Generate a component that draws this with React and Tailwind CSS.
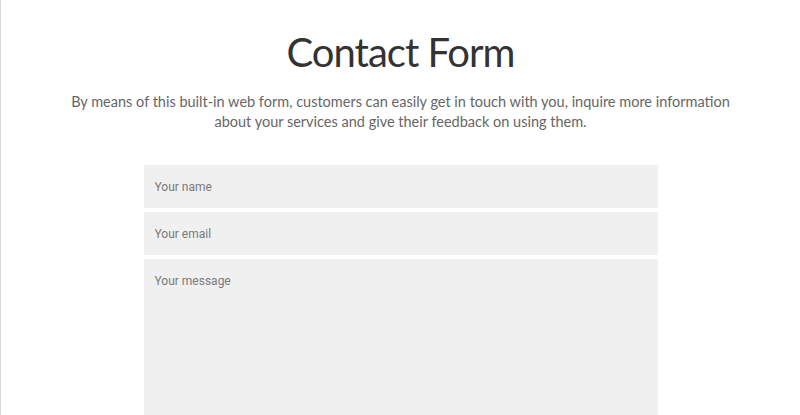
import React from "react";

const ContactForm = () => {
  return (
    <div className="flex w-full h-[415px] flex-col items-center border-l border-[#d9d9d9] bg-white overflow-hidden">
      <h1
        className="mt-[28px] text-[40px] leading-[49px] tracking-[-1px] text-[#333333]"
        style={{ fontFamily: "Lato, 'Open Sans', sans-serif" }}
      >
        Contact Form
      </h1>
      <p
        className="mt-[15px] text-center text-[14.5px] leading-[20px] text-[#666666]"
        style={{ fontFamily: "Lato, 'Noto Sans', sans-serif" }}
      >
        By means of this built-in web form, customers can easily get in touch
        with you, inquire more information
        <br />
        about your services and give their feedback on using them.
      </p>
      <form
        className="mt-[33px] flex w-[514px] flex-col gap-[4px]"
        style={{ fontFamily: "Roboto, 'Liberation Sans', sans-serif" }}
      >
        <input
          type="text"
          placeholder="Your name"
          className="h-[43px] w-full bg-[#f0f0f0] px-[11px] text-[12px] text-[#555] placeholder:text-[#7a7a7a] outline-none"
        />
        <input
          type="email"
          placeholder="Your email"
          className="h-[43px] w-full bg-[#f0f0f0] px-[11px] text-[12px] text-[#555] placeholder:text-[#7a7a7a] outline-none"
        />
        <textarea
          placeholder="Your message"
          className="h-[200px] w-full resize-none bg-[#f0f0f0] px-[11px] py-[13px] text-[12px] text-[#555] placeholder:text-[#7a7a7a] outline-none"
        />
      </form>
    </div>
  );
};

export default function App() {
  return <ContactForm />;
}
